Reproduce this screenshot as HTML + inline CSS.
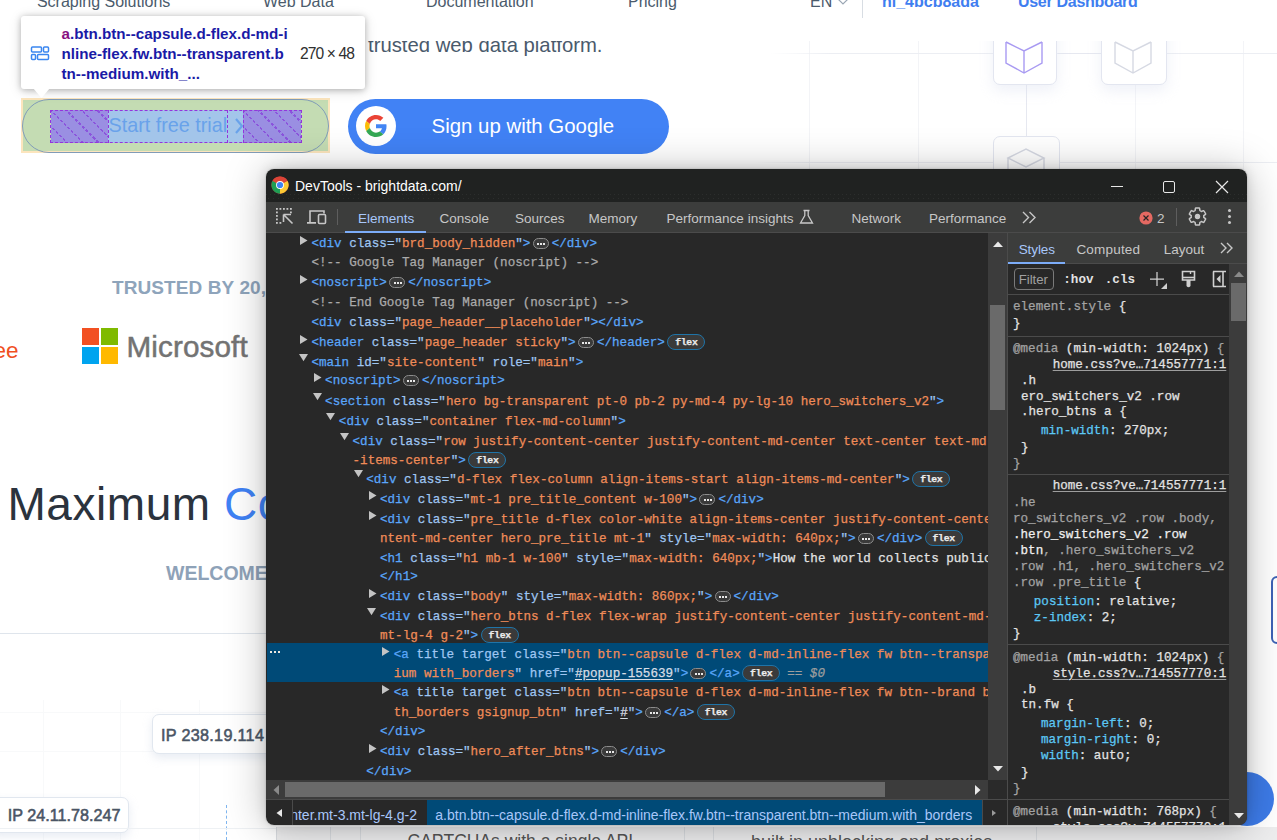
<!DOCTYPE html>
<html><head><meta charset="utf-8"><title>DevTools</title>
<style>
html,body{margin:0;padding:0}
body{width:1277px;height:840px;overflow:hidden;position:relative;background:#fff;font-family:"Liberation Sans",sans-serif}
.r{position:absolute}
.t{position:absolute;white-space:pre;line-height:1}
.dl{position:absolute;white-space:pre;font-family:"Liberation Mono",monospace;font-size:12.58px;line-height:19.556px;height:19.556px;-webkit-text-stroke:0.25px currentColor}
.ell{display:inline-block;vertical-align:top;margin:3px 3px 0 2.3px;width:16px;height:11px;box-sizing:border-box;border:1px solid #8c8c8c;border-radius:6px;background:#3a3a3a;position:relative}
.ell i{position:absolute;top:4px;width:2px;height:2px;background:#e8e8e8}
.ell i:nth-child(1){left:3.5px} .ell i:nth-child(2){left:6.5px} .ell i:nth-child(3){left:9.5px}
.flex{display:inline-block;vertical-align:top;margin:0 0 0 2.5px;width:38px;height:16px;box-sizing:border-box;border:1px solid #1f74a8;border-radius:8px;background:#3a3a3a;color:#ececec;font-family:"Liberation Mono",monospace;font-weight:bold;font-size:9.8px;line-height:15.5px;text-align:center;letter-spacing:-0.3px}
#dt{position:absolute;left:266px;top:169px;width:981px;height:656px;border-radius:8px;overflow:hidden;box-shadow:0 2px 42px rgba(0,0,0,.27),0 0 12px rgba(0,0,0,.13),0 0 2px rgba(0,0,0,.25)}
#dti{position:absolute;left:-266px;top:-169px;width:1277px;height:840px}
</style></head><body>
<div id="page"><div class="r" style="left:808.6px;top:41px;width:1px;height:130px;background:#f3f4f7"></div><div class="r" style="left:917.9px;top:41px;width:1px;height:130px;background:#f3f4f7"></div><div class="r" style="left:1134.5px;top:41px;width:1px;height:130px;background:#f3f4f7"></div><div class="r" style="left:1243px;top:41px;width:1px;height:130px;background:#f3f4f7"></div><div class="r" style="left:770px;top:53px;width:507px;height:1px;background:linear-gradient(90deg,rgba(236,238,243,0),#eceef3 60px)"></div><div class="r" style="left:755px;top:161.6px;width:522px;height:1px;background:linear-gradient(90deg,rgba(236,238,243,0),#eceef3 60px)"></div><div class="r" style="left:1026px;top:85px;width:1px;height:52px;background:#e6e8f0"></div><div class="r" style="left:1058px;top:53px;width:43px;height:1px;background:#e6e8f0"></div><div class="r" style="left:993px;top:10px;width:64px;height:75px;border:1.5px solid #e3e6f0;border-radius:7px;background:#fff;box-sizing:border-box;box-shadow:0 6px 14px rgba(220,224,240,.45)"></div><div class="r" style="left:1101px;top:10px;width:66px;height:75px;border:1.5px solid #e3e6f0;border-radius:7px;background:#fff;box-sizing:border-box;box-shadow:0 6px 14px rgba(220,224,240,.45)"></div><div class="r" style="left:993px;top:136px;width:67px;height:60px;border:1.5px solid #e3e6f0;border-radius:7px;background:#fff;box-sizing:border-box"></div><svg class="r" style="left:1000px;top:17px" width="50" height="60" viewBox="0 0 50 60"><path d="M6 25 L6 46 L24 56 L42 46 L42 25 M6 25 L24 34 L42 25 M24 34 L24 56" fill="none" stroke="#a99bf2" stroke-width="1.4"/></svg><svg class="r" style="left:1109px;top:17px" width="50" height="60" viewBox="0 0 50 60"><path d="M6 25 L6 46 L24 56 L42 46 L42 25 M6 25 L24 34 L42 25 M24 34 L24 56" fill="none" stroke="#d6d9e3" stroke-width="1.4"/></svg><svg class="r" style="left:1003px;top:146px" width="50" height="40" viewBox="0 0 50 40"><path d="M5 12 L23 3 L41 12 L23 21 Z M5 12 L5 30 M41 12 L41 30" fill="none" stroke="#d6d9e3" stroke-width="1.4"/></svg><div class="r" style="left:0px;top:0px;width:1277px;height:41px;background:#fff"></div><div class="t" style="left:36.90px;top:-5.94px;font-size:16px;color:#4b5b6c;font-weight:normal;font-family:'Liberation Sans', sans-serif;">Scraping Solutions</div><div class="t" style="left:263.00px;top:-5.94px;font-size:16px;color:#4b5b6c;font-weight:normal;font-family:'Liberation Sans', sans-serif;">Web Data</div><div class="t" style="left:426.00px;top:-5.94px;font-size:16px;color:#4b5b6c;font-weight:normal;font-family:'Liberation Sans', sans-serif;">Documentation</div><div class="t" style="left:628.00px;top:-5.94px;font-size:16px;color:#4b5b6c;font-weight:normal;font-family:'Liberation Sans', sans-serif;">Pricing</div><div class="t" style="left:810.00px;top:-5.94px;font-size:16px;color:#4b5b6c;font-weight:normal;font-family:'Liberation Sans', sans-serif;">EN</div><svg class="r" style="left:836px;top:-3px" width="14" height="10"><path d="M2 2 L7 7 L12 2" fill="none" stroke="#9aa6b4" stroke-width="1.2"/></svg><div class="r" style="left:862px;top:0px;width:1px;height:18px;background:#d8dde3"></div><div class="t" style="left:882.00px;top:-5.94px;font-size:16px;color:#3f7ef0;font-weight:bold;font-family:'Liberation Sans', sans-serif;">hl_4bcb8ada</div><div class="t" style="left:1018.00px;top:-5.94px;font-size:16px;color:#3f7ef0;font-weight:bold;font-family:'Liberation Sans', sans-serif;letter-spacing:-0.3px">User Dashboard</div><div class="r" style="left:0;top:41px;width:700px;height:30px;overflow:hidden"><div class="t" style="left:368.00px;top:-5.88px;font-size:20.3px;color:#4a5a6c;font-weight:normal;font-family:'Liberation Sans', sans-serif;">trusted web data platform.</div></div><div class="r" style="left:348px;top:99px;width:321px;height:55px;background:#4182f5;border-radius:28px"></div><div class="r" style="left:356px;top:106px;width:40px;height:40px;background:#fff;border-radius:50%"></div><svg class="r" style="left:365px;top:115px" width="22" height="22" viewBox="0 0 48 48"><path fill="#EA4335" d="M24 9.5c3.54 0 6.71 1.22 9.21 3.6l6.85-6.85C35.9 2.38 30.47 0 24 0 14.62 0 6.51 5.38 2.56 13.22l7.98 6.19C12.43 13.72 17.74 9.5 24 9.5z"/><path fill="#4285F4" d="M46.98 24.55c0-1.57-.15-3.09-.38-4.55H24v9.02h12.94c-.58 2.96-2.26 5.48-4.78 7.18l7.73 6c4.51-4.18 7.09-10.36 7.09-17.65z"/><path fill="#FBBC05" d="M10.53 28.59c-.48-1.45-.76-2.99-.76-4.59s.27-3.14.76-4.59l-7.98-6.19C.92 16.46 0 20.12 0 24c0 3.88.92 7.54 2.56 10.78l7.97-6.19z"/><path fill="#34A853" d="M24 48c6.48 0 11.93-2.13 15.89-5.81l-7.73-6c-2.15 1.45-4.92 2.3-8.16 2.3-6.26 0-11.57-4.22-13.47-9.91l-7.98 6.19C6.51 42.62 14.62 48 24 48z"/></svg><div class="t" style="left:431.60px;top:116.03px;font-size:20.4px;color:#ffffff;font-weight:normal;font-family:'Liberation Sans', sans-serif;">Sign up with Google</div><div class="r" style="left:21px;top:97.8px;width:309px;height:55.6px;background:#fce5bd"></div><div class="r" style="left:23px;top:99.8px;width:305px;height:51.6px;background:#c4dcb3"></div><div class="r" style="left:50.7px;top:110.2px;width:250.5px;height:32.4px;background:#a3c5ea"></div><div class="r" style="left:50.7px;top:110.2px;width:57.8px;height:32.4px;background:repeating-linear-gradient(-45deg, rgba(154,143,226,1) 0 2px, rgba(154,143,226,0) 2px 5px),repeating-linear-gradient(45deg, #8b55dc 0 1.7px, #9a8fe2 1.7px 11px)"></div><div class="r" style="left:243.2px;top:110.2px;width:58px;height:32.4px;background:repeating-linear-gradient(-45deg, rgba(154,143,226,1) 0 2px, rgba(154,143,226,0) 2px 5px),repeating-linear-gradient(45deg, #8b55dc 0 1.7px, #9a8fe2 1.7px 11px)"></div><div class="r" style="left:50.2px;top:109.7px;width:251.5px;height:33.4px;border:1.6px dashed #9434dc;box-sizing:border-box"></div><div class="r" style="left:107.5px;top:110.2px;width:0px;height:32.4px;border-left:1.6px dashed #9434dc"></div><div class="r" style="left:227px;top:110.2px;width:0px;height:32.4px;border-left:1.6px dashed #9434dc"></div><div class="r" style="left:242.5px;top:110.2px;width:0px;height:32.4px;border-left:1.6px dashed #9434dc"></div><div class="r" style="left:22px;top:98.9px;width:307px;height:54.6px;border:1.8px solid #819cb8;border-radius:27px;box-sizing:border-box"></div><div class="t" style="left:108.50px;top:115.88px;font-size:19.75px;color:#69a2ea;font-weight:normal;font-family:'Liberation Sans', sans-serif;">Start free trial</div><svg class="r" style="left:233px;top:117px" width="12" height="18"><path d="M3 2 L9 9 L3 16" fill="none" stroke="#69a2ea" stroke-width="2.2"/></svg><div class="t" style="left:112.00px;top:277.72px;font-size:19px;color:#8ea4bb;font-weight:bold;font-family:'Liberation Sans', sans-serif;letter-spacing:0.1px">TRUSTED BY 20,</div><div class="t" style="left:-6.50px;top:340.35px;font-size:22.5px;color:#f0501f;font-weight:normal;font-family:'Liberation Sans', sans-serif;">ee</div><div class="r" style="left:82px;top:328px;width:17px;height:17px;background:#f25022"></div><div class="r" style="left:101px;top:328px;width:17px;height:17px;background:#7fba00"></div><div class="r" style="left:82px;top:347px;width:17px;height:17px;background:#00a4ef"></div><div class="r" style="left:101px;top:347px;width:17px;height:17px;background:#ffb900"></div><div class="t" style="left:126.50px;top:331.66px;font-size:29.7px;color:#737373;font-weight:normal;font-family:'Liberation Sans', sans-serif;letter-spacing:0.1px;-webkit-text-stroke:0.5px #737373">Microsoft</div><div class="t" style="left:7.50px;top:481.46px;font-size:46px;color:#2b333d;font-weight:normal;font-family:'Liberation Sans', sans-serif;letter-spacing:0.55px">Maximum <span style="color:#3f82f5">Control</span></div><div class="t" style="left:166.00px;top:563.99px;font-size:19.5px;color:#8ea2b8;font-weight:bold;font-family:'Liberation Sans', sans-serif;">WELCOME TO BRIGHT DATA</div><div class="r" style="left:0px;top:633px;width:266px;height:1px;background:#dfe5ec"></div><div class="r" style="left:43px;top:700px;width:1px;height:140px;background:#f8f9fa"></div><div class="r" style="left:120px;top:700px;width:1px;height:140px;background:#f8f9fa"></div><div class="r" style="left:199px;top:700px;width:1px;height:140px;background:#f8f9fa"></div><div class="r" style="left:0px;top:712px;width:266px;height:1px;background:#f8f9fa"></div><div class="r" style="left:0px;top:750.7px;width:266px;height:1px;background:#f8f9fa"></div><div class="r" style="left:0px;top:828px;width:266px;height:1px;background:#f8f9fa"></div><div class="r" style="left:152px;top:714.3px;width:160px;height:40px;background:#fff;border:1px solid #e1e7ef;border-radius:7px;box-sizing:border-box;box-shadow:0 4px 10px rgba(190,200,220,.35)"></div><div class="t" style="left:161.00px;top:727.49px;font-size:16.2px;color:#4a5565;font-weight:normal;font-family:'Liberation Sans', sans-serif;-webkit-text-stroke:0.55px #4a5565;letter-spacing:0.3px">IP 238.19.114</div><div class="r" style="left:-10px;top:797px;width:139.3px;height:36px;background:#fff;border:1px solid #e1e7ef;border-radius:7px;box-sizing:border-box;box-shadow:0 4px 10px rgba(190,200,220,.35)"></div><div class="t" style="left:7.80px;top:807.49px;font-size:16.2px;color:#4a5565;font-weight:normal;font-family:'Liberation Sans', sans-serif;-webkit-text-stroke:0.55px #4a5565;letter-spacing:0px">IP 24.11.78.247</div><div class="r" style="left:226px;top:805px;width:0px;height:35px;border-left:1px dashed #7fb6f0"></div><div class="r" style="left:276px;top:827px;width:1001px;height:13px;background:#ededee"></div><div class="r" style="left:276px;top:827px;width:1px;height:13px;background:#d9dce0"></div><div class="r" style="left:330px;top:827px;width:1px;height:13px;background:#d9dce0"></div><div class="r" style="left:359.5px;top:827px;width:1px;height:13px;background:#d9dce0"></div><div class="r" style="left:683.5px;top:827px;width:1px;height:13px;background:#d9dce0"></div><div class="r" style="left:712.7px;top:827px;width:1px;height:13px;background:#d9dce0"></div><div class="r" style="left:1036px;top:827px;width:1px;height:13px;background:#d9dce0"></div><div class="r" style="left:0px;top:827.5px;width:276px;height:1px;background:#eef1f4"></div><div class="t" style="left:407.50px;top:833.19px;font-size:17.5px;color:#555;font-weight:normal;font-family:'Liberation Sans', sans-serif;">CAPTCHAs with a single API</div><div class="t" style="left:751.00px;top:832.76px;font-size:18px;color:#555;font-weight:normal;font-family:'Liberation Sans', sans-serif;">built in unblocking and proxies</div><div class="r" style="left:1271px;top:575.7px;width:20px;height:68px;border:2.5px solid #3d62b5;border-radius:6px;box-sizing:border-box"></div><div class="r" style="left:1220px;top:772px;width:54px;height:54px;background:#3d7be8;border-radius:50%"></div></div>
<div id="tt"><div class="r" style="left:21px;top:16px;width:344px;height:73px;background:#fff;border-radius:3px;box-shadow:0 1px 6px rgba(0,0,0,.25), 0 2px 14px rgba(0,0,0,.12)"></div><svg class="r" style="left:30px;top:88px" width="24" height="12"><path d="M3 0 L11.5 10 L20 0 Z" fill="#fff"/></svg><svg class="r" style="left:30px;top:46px" width="20" height="15" viewBox="0 0 20 15"><g fill="none" stroke="#3a86f0" stroke-width="1.5"><rect x="1.5" y="1" width="10" height="5" rx="1"/><rect x="13.5" y="1" width="5" height="5" rx="1"/><rect x="1.5" y="8.5" width="4" height="5" rx="1"/><rect x="7.5" y="8.5" width="11" height="5" rx="1"/></g></svg><div class="t" style="left:61.50px;top:25.88px;font-size:15.2px;color:#1a1aa6;font-weight:bold;font-family:'Liberation Sans', sans-serif;"><span style="color:#881280">a</span>.btn.btn--capsule.d-flex.d-md-i</div><div class="t" style="left:61.50px;top:45.88px;font-size:15.2px;color:#1a1aa6;font-weight:bold;font-family:'Liberation Sans', sans-serif;">nline-flex.fw.btn--transparent.b</div><div class="t" style="left:61.50px;top:66.13px;font-size:15.2px;color:#1a1aa6;font-weight:bold;font-family:'Liberation Sans', sans-serif;">tn--medium.with_...</div><div class="t" style="left:300.00px;top:45.69px;font-size:15.6px;color:#303030;font-weight:normal;font-family:'Liberation Sans', sans-serif;letter-spacing:-0.9px">270 × 48</div></div>
<div id="dt"><div id="dti"><div class="r" style="left:266px;top:169px;width:981px;height:33px;background:#202221"></div><div class="r" style="left:266px;top:194px;width:981px;height:1px;background:repeating-linear-gradient(90deg,#2c2e2d 0 1.3px,transparent 1.3px 4px)"></div><div class="r" style="left:268px;top:198px;width:979px;height:1px;background:repeating-linear-gradient(90deg,#2c2e2d 0 1.3px,transparent 1.3px 5px)"></div><div class="r" style="left:266px;top:202px;width:981px;height:30px;background:#3c3d3c"></div><div class="r" style="left:266px;top:232px;width:981px;height:1px;background:#4b4b4b"></div><div class="r" style="left:266px;top:233px;width:722px;height:547px;background:#282828"></div><div class="r" style="left:988px;top:233px;width:19px;height:547px;background:#3c3c3c"></div><div class="r" style="left:990px;top:305px;width:15px;height:105px;background:#6a6a6a"></div><svg class="r" style="left:992px;top:240px" width="12" height="8"><path d="M1 7 L6 1.5 L11 7 Z" fill="#e8e8e8"/></svg><svg class="r" style="left:992px;top:765px" width="12" height="8"><path d="M1 1 L6 6.5 L11 1 Z" fill="#e8e8e8"/></svg><div class="r" style="left:266px;top:780px;width:722px;height:19px;background:#3c3c3c"></div><div class="r" style="left:284.7px;top:782.3px;width:600px;height:14.5px;background:#6a6a6a"></div><svg class="r" style="left:272px;top:784px" width="8" height="12"><path d="M7 1 L1.5 6 L7 11 Z" fill="#8a8a8a"/></svg><svg class="r" style="left:974px;top:784px" width="8" height="12"><path d="M1 1 L6.5 6 L1 11 Z" fill="#e8e8e8"/></svg><div class="r" style="left:988px;top:780px;width:19px;height:19px;background:#2a2a2a"></div><div class="r" style="left:266px;top:799px;width:741px;height:1px;background:#4b4b4b"></div><div class="r" style="left:266px;top:800px;width:741px;height:25px;background:#282828"></div><div class="r" style="left:292px;top:800px;width:1px;height:25px;background:#4a4a4a"></div><svg class="r" style="left:275px;top:808px" width="8" height="10"><path d="M7 1 L1.5 5 L7 9 Z" fill="#e8e8e8"/></svg><div class="r" style="left:293px;top:800px;width:134px;height:25px;overflow:hidden"><div class="r" style="left:-293px;top:-800px;width:1277px;height:840px"><div class="t" style="left:290.20px;top:807.75px;font-size:14.0px;color:#a8c7fa;font-weight:normal;font-family:'Liberation Sans', sans-serif;">nter.mt-3.mt-lg-4.g-2</div></div></div><div class="r" style="left:427px;top:800px;width:555px;height:25px;background:#004a77"></div><div class="t" style="left:435.30px;top:807.75px;font-size:14.0px;color:#a8c7fa;font-weight:normal;font-family:'Liberation Sans', sans-serif;">a.btn.btn--capsule.d-flex.d-md-inline-flex.fw.btn--transparent.btn--medium.with_borders</div><div class="r" style="left:982px;top:800px;width:25px;height:25px;background:#282828"></div><div class="r" style="left:982px;top:800px;width:1px;height:25px;background:#4a4a4a"></div><svg class="r" style="left:990px;top:808px" width="8" height="10"><path d="M2 2 L6 5 L2 8 Z" fill="#9a9a9a"/></svg><div class="r" style="left:1007px;top:233px;width:1px;height:592px;background:#4b4b4b"></div><div class="r" style="left:1008px;top:233px;width:239px;height:30px;background:#3c3d3c"></div><div class="r" style="left:1008px;top:263px;width:239px;height:1px;background:#4b4b4b"></div><div class="r" style="left:1008px;top:262px;width:57px;height:2px;background:#7cacf8"></div><div class="r" style="left:1008px;top:264px;width:239px;height:561px;background:#282828"></div><div class="r" style="left:1229px;top:264px;width:18px;height:561px;background:#3c3c3c"></div><div class="r" style="left:1231px;top:283px;width:14.5px;height:38px;background:#6a6a6a"></div><svg class="r" style="left:1233px;top:270px" width="12" height="8"><path d="M1 7 L6 1.5 L11 7 Z" fill="#8a8a8a"/></svg><svg class="r" style="left:1233px;top:812px" width="12" height="8"><path d="M1 1 L6 6.5 L11 1 Z" fill="#e8e8e8"/></svg><div class="t" style="left:1018.70px;top:242.57px;font-size:13.5px;color:#a8c7fa;font-weight:normal;font-family:'Liberation Sans', sans-serif;letter-spacing:-0.1px">Styles</div><div class="t" style="left:1076.40px;top:242.57px;font-size:13.5px;color:#c7c7c7;font-weight:normal;font-family:'Liberation Sans', sans-serif;letter-spacing:0.2px">Computed</div><div class="t" style="left:1163.80px;top:242.57px;font-size:13.5px;color:#c7c7c7;font-weight:normal;font-family:'Liberation Sans', sans-serif;">Layout</div><svg class="r" style="left:1219px;top:242px" width="16" height="12"><path d="M2 1 L7 6 L2 11 M8 1 L13 6 L8 11" fill="none" stroke="#c7c7c7" stroke-width="1.4"/></svg><div class="r" style="left:1014px;top:268px;width:40px;height:21.5px;border:1px solid #7a7a7a;border-radius:4px;box-sizing:border-box"></div><div class="t" style="left:1018.70px;top:272.83px;font-size:13.2px;color:#a0a0a0;font-weight:normal;font-family:'Liberation Sans', sans-serif;">Filter</div><div class="t" style="left:1063.30px;top:274.36px;font-size:12.58px;color:#e3e3e3;font-weight:bold;font-family:'Liberation Mono', monospace;">:hov</div><div class="t" style="left:1104.80px;top:274.36px;font-size:12.58px;color:#e3e3e3;font-weight:bold;font-family:'Liberation Mono', monospace;">.cls</div><svg class="r" style="left:1148px;top:270px" width="22" height="20"><path d="M9 2 V16 M2 9 H16" stroke="#d0d0d0" stroke-width="1.25"/><path d="M19 13 V19 H13 Z" fill="#d0d0d0"/></svg><svg class="r" style="left:1180px;top:270px" width="17" height="19"><path d="M2.5 1.5 H14.5 V10 H2.5 Z" fill="none" stroke="#d0d0d0" stroke-width="1.6"/><path d="M2.5 7.5 H14.5" stroke="#d0d0d0" stroke-width="1.6"/><path d="M10.5 1.5 V4" stroke="#d0d0d0" stroke-width="1.4"/><path d="M6.5 10 H10.5 V16 Q8.5 18.5 6.5 16 Z" fill="#d0d0d0"/></svg><svg class="r" style="left:1211px;top:270px" width="17" height="18"><path d="M2 1.5 H15 M2 16.5 H15 M2.5 1.5 V16.5 M12 1.5 V16.5" fill="none" stroke="#d0d0d0" stroke-width="1.6"/><path d="M9.5 5 L5.5 9 L9.5 13 Z" fill="#d0d0d0"/></svg><div class="r" style="left:1008px;top:294px;width:221px;height:1px;background:#4b4b4b"></div><svg class="r" style="left:271px;top:176px" width="18" height="18" viewBox="0 0 48 48"><circle cx="24" cy="24" r="23" fill="#dc4437"/><path d="M24 24 L4.1 12.5 A23 23 0 0 0 24 47 Z" fill="#1e9e54"/><path d="M24 24 L24 47 A23 23 0 0 0 43.9 12.5 Z" fill="#fcc934"/><path d="M24 24 L43.9 12.5 A23 23 0 0 0 4.1 12.5 Z" fill="#dc4437"/><circle cx="24" cy="24" r="10.5" fill="#fff"/><circle cx="24" cy="24" r="8.3" fill="#3e83f1"/></svg><div class="t" style="left:295.00px;top:179.15px;font-size:14px;color:#ffffff;font-weight:normal;font-family:'Liberation Sans', sans-serif;">DevTools - brightdata.com/</div><div class="r" style="left:1111px;top:186px;width:11.5px;height:1px;background:#e8e8e8"></div><div class="r" style="left:1163px;top:181px;width:12px;height:11.5px;border:1.2px solid #e8e8e8;border-radius:2px;box-sizing:border-box"></div><svg class="r" style="left:1215px;top:180px" width="14" height="14"><path d="M1 1 L13 13 M13 1 L1 13" stroke="#e8e8e8" stroke-width="1.2"/></svg><svg class="r" style="left:275px;top:207px" width="20" height="20" viewBox="0 0 20 20"><g fill="#c7c7c7"><rect x="1" y="1" width="1.8" height="1.8"/><rect x="4.5" y="1" width="1.8" height="1.8"/><rect x="8" y="1" width="1.8" height="1.8"/><rect x="11.5" y="1" width="1.8" height="1.8"/><rect x="15" y="1" width="1.8" height="1.8"/><rect x="1" y="4.5" width="1.8" height="1.8"/><rect x="1" y="8" width="1.8" height="1.8"/><rect x="1" y="11.5" width="1.8" height="1.8"/><rect x="1" y="15" width="1.8" height="1.8"/><rect x="4.5" y="15" width="1.8" height="1.8"/><rect x="15" y="4.5" width="1.8" height="1.8"/></g><path d="M8.5 7.5 H16 M8.5 7.5 V15 M8.5 7.5 L17.5 16.5" stroke="#c7c7c7" stroke-width="1.6" fill="none"/></svg><svg class="r" style="left:306px;top:209px" width="22" height="16" viewBox="0 0 22 16"><path d="M4 13.5 V2 H18 V4.5" fill="none" stroke="#c7c7c7" stroke-width="1.6"/><path d="M1 13.8 H10" stroke="#c7c7c7" stroke-width="1.8"/><rect x="12.5" y="5.5" width="7" height="9" rx="1" fill="none" stroke="#c7c7c7" stroke-width="1.6"/></svg><div class="r" style="left:337px;top:209px;width:1px;height:16px;background:#5e5e5e"></div><div class="r" style="left:345px;top:231.2px;width:81px;height:2px;background:#7cacf8"></div><div class="t" style="left:358.00px;top:211.87px;font-size:13.5px;color:#a8c7fa;font-weight:normal;font-family:'Liberation Sans', sans-serif;">Elements</div><div class="t" style="left:439.50px;top:211.87px;font-size:13.5px;color:#c7c7c7;font-weight:normal;font-family:'Liberation Sans', sans-serif;">Console</div><div class="t" style="left:515.00px;top:211.87px;font-size:13.5px;color:#c7c7c7;font-weight:normal;font-family:'Liberation Sans', sans-serif;">Sources</div><div class="t" style="left:588.60px;top:211.87px;font-size:13.5px;color:#c7c7c7;font-weight:normal;font-family:'Liberation Sans', sans-serif;">Memory</div><div class="t" style="left:666.60px;top:211.87px;font-size:13.5px;color:#c7c7c7;font-weight:normal;font-family:'Liberation Sans', sans-serif;">Performance insights</div><svg class="r" style="left:799px;top:209px" width="15" height="16"><path d="M4.5 1.5 H10.5 M5.8 1.5 V6.5 L1.5 14 H13.5 L9.2 6.5 V1.5" fill="none" stroke="#c7c7c7" stroke-width="1.3"/></svg><div class="t" style="left:851.60px;top:211.87px;font-size:13.5px;color:#c7c7c7;font-weight:normal;font-family:'Liberation Sans', sans-serif;">Network</div><div class="t" style="left:929.00px;top:211.87px;font-size:13.5px;color:#c7c7c7;font-weight:normal;font-family:'Liberation Sans', sans-serif;">Performance</div><svg class="r" style="left:1021px;top:211px" width="17" height="13"><path d="M2 1 L7.5 6.5 L2 12 M8.5 1 L14 6.5 L8.5 12" fill="none" stroke="#c7c7c7" stroke-width="1.4"/></svg><svg class="r" style="left:1139px;top:211px" width="14" height="14"><circle cx="7" cy="7" r="6.6" fill="#e46962"/><path d="M4.5 4.5 L9.5 9.5 M9.5 4.5 L4.5 9.5" stroke="#262626" stroke-width="1.2"/></svg><div class="t" style="left:1157.00px;top:212.37px;font-size:13.5px;color:#c7c7c7;font-weight:normal;font-family:'Liberation Sans', sans-serif;">2</div><div class="r" style="left:1176px;top:208px;width:1px;height:18px;background:#5e5e5e"></div><svg class="r" style="left:1187px;top:206px" width="21" height="21" viewBox="0 0 24 24"><path fill="none" stroke="#c7c7c7" stroke-width="1.7" stroke-linejoin="round" d="M19.14 12.94c.04-.3.06-.61.06-.94 0-.32-.02-.64-.07-.94l2.03-1.58c.18-.14.23-.41.12-.61l-1.92-3.32c-.12-.22-.37-.29-.59-.22l-2.39.96c-.5-.38-1.030-.7-1.62-.94l-.36-2.54c-.04-.24-.24-.41-.48-.41h-3.84c-.24 0-.43.17-.47.41l-.36 2.540c-.59.24-1.13.57-1.62.94l-2.39-.96c-.22-.08-.47 0-.59.22L2.74 8.87c-.12.21-.08.47.12.61l2.03 1.58c-.05.3-.09.63-.09.94s.02.64.07.94l-2.03 1.58c-.18.14-.23.41-.12.61l1.92 3.32c.12.22.37.29.59.22l2.39-.96c.5.38 1.03.7 1.62.94l.36 2.54c.05.24.24.41.48.41h3.84c.24 0 .44-.17.47-.41l.36-2.54c.59-.24 1.13-.56 1.62-.94l2.39.96c.22.08.47 0 .59-.22l1.92-3.32c.12-.22.07-.47-.12-.61l-2.01-1.58z"/><circle cx="12" cy="12" r="3.1" fill="#c7c7c7"/></svg><div class="r" style="left:1228px;top:209px;width:3.2px;height:3.2px;background:#c7c7c7;border-radius:50%"></div><div class="r" style="left:1228px;top:214.8px;width:3.2px;height:3.2px;background:#c7c7c7;border-radius:50%"></div><div class="r" style="left:1228px;top:220.6px;width:3.2px;height:3.2px;background:#c7c7c7;border-radius:50%"></div><div class="r" style="left:267px;top:642.5px;width:721px;height:39.1px;background:#004a77"></div><div class="r" style="left:270px;top:651px;width:2.2px;height:2.2px;background:#ece8e0"></div><div class="r" style="left:274px;top:651px;width:2.2px;height:2.2px;background:#ece8e0"></div><div class="r" style="left:278px;top:651px;width:2.2px;height:2.2px;background:#ece8e0"></div><div class="r" style="left:266px;top:233px;width:722px;height:547px;overflow:hidden"><div class="r" style="left:-266px;top:-233px;width:1277px;height:840px"><svg class="r" style="left:300.00px;top:235.90px" width="9" height="10"><path d="M0 0 L7.5 4.5 L0 9 Z" fill="#c4c4c4"/></svg><div class="dl" style="left:311.40px;top:235.17px"><span style="color:#5aa6fa">&lt;div</span><span style="color:#e3e3e3"> </span><span style="color:#9fc6f2">class="</span><span style="color:#f08c58">brd_body_hidden</span><span style="color:#9fc6f2">"</span><span style="color:#5aa6fa">&gt;</span><span class="ell"><i></i><i></i><i></i></span><span style="color:#5aa6fa">&lt;/div&gt;</span></div><div class="dl" style="left:311.40px;top:253.97px"><span style="color:#ababab">&lt;!-- Google Tag Manager (noscript) --&gt;</span></div><svg class="r" style="left:300.00px;top:274.70px" width="9" height="10"><path d="M0 0 L7.5 4.5 L0 9 Z" fill="#c4c4c4"/></svg><div class="dl" style="left:311.40px;top:273.97px"><span style="color:#5aa6fa">&lt;noscript&gt;</span><span class="ell"><i></i><i></i><i></i></span><span style="color:#5aa6fa">&lt;/noscript&gt;</span></div><div class="dl" style="left:311.40px;top:293.97px"><span style="color:#ababab">&lt;!-- End Google Tag Manager (noscript) --&gt;</span></div><div class="dl" style="left:311.40px;top:313.97px"><span style="color:#5aa6fa">&lt;div</span><span style="color:#e3e3e3"> </span><span style="color:#9fc6f2">class="</span><span style="color:#f08c58">page_header__placeholder</span><span style="color:#9fc6f2">"</span><span style="color:#5aa6fa">&gt;&lt;/div&gt;</span></div><svg class="r" style="left:300.00px;top:334.70px" width="9" height="10"><path d="M0 0 L7.5 4.5 L0 9 Z" fill="#c4c4c4"/></svg><div class="dl" style="left:311.40px;top:333.97px"><span style="color:#5aa6fa">&lt;header</span><span style="color:#e3e3e3"> </span><span style="color:#9fc6f2">class="</span><span style="color:#f08c58">page_header sticky</span><span style="color:#9fc6f2">"</span><span style="color:#5aa6fa">&gt;</span><span class="ell"><i></i><i></i><i></i></span><span style="color:#5aa6fa">&lt;/header&gt;</span><span class="flex">flex</span></div><svg class="r" style="left:298.80px;top:353.80px" width="10" height="8"><path d="M0 0 L9 0 L4.5 7.3 Z" fill="#c4c4c4"/></svg><div class="dl" style="left:311.40px;top:353.97px"><span style="color:#5aa6fa">&lt;main</span><span style="color:#e3e3e3"> </span><span style="color:#9fc6f2">id="</span><span style="color:#f08c58">site-content</span><span style="color:#9fc6f2">" role="</span><span style="color:#f08c58">main</span><span style="color:#9fc6f2">"</span><span style="color:#5aa6fa">&gt;</span></div><svg class="r" style="left:313.72px;top:373.20px" width="9" height="10"><path d="M0 0 L7.5 4.5 L0 9 Z" fill="#c4c4c4"/></svg><div class="dl" style="left:325.12px;top:372.47px"><span style="color:#5aa6fa">&lt;noscript&gt;</span><span class="ell"><i></i><i></i><i></i></span><span style="color:#5aa6fa">&lt;/noscript&gt;</span></div><svg class="r" style="left:312.52px;top:392.80px" width="10" height="8"><path d="M0 0 L9 0 L4.5 7.3 Z" fill="#c4c4c4"/></svg><div class="dl" style="left:325.12px;top:392.97px"><span style="color:#5aa6fa">&lt;section</span><span style="color:#e3e3e3"> </span><span style="color:#9fc6f2">class="</span><span style="color:#f08c58">hero bg-transparent pt-0 pb-2 py-md-4 py-lg-10 hero_switchers_v2</span><span style="color:#9fc6f2">"</span><span style="color:#5aa6fa">&gt;</span></div><svg class="r" style="left:326.24px;top:412.80px" width="10" height="8"><path d="M0 0 L9 0 L4.5 7.3 Z" fill="#c4c4c4"/></svg><div class="dl" style="left:338.84px;top:412.97px"><span style="color:#5aa6fa">&lt;div</span><span style="color:#e3e3e3"> </span><span style="color:#9fc6f2">class="</span><span style="color:#f08c58">container flex-md-column</span><span style="color:#9fc6f2">"</span><span style="color:#5aa6fa">&gt;</span></div><svg class="r" style="left:339.96px;top:432.80px" width="10" height="8"><path d="M0 0 L9 0 L4.5 7.3 Z" fill="#c4c4c4"/></svg><div class="dl" style="left:352.56px;top:432.97px"><span style="color:#5aa6fa">&lt;div</span><span style="color:#e3e3e3"> </span><span style="color:#9fc6f2">class="</span><span style="color:#f08c58">row justify-content-center justify-content-md-center text-center text-md-center align</span></div><div class="dl" style="left:352.56px;top:452.07px"><span style="color:#f08c58">-items-center</span><span style="color:#9fc6f2">"</span><span style="color:#5aa6fa">&gt;</span><span class="flex">flex</span></div><svg class="r" style="left:353.68px;top:470.40px" width="10" height="8"><path d="M0 0 L9 0 L4.5 7.3 Z" fill="#c4c4c4"/></svg><div class="dl" style="left:366.28px;top:470.57px"><span style="color:#5aa6fa">&lt;div</span><span style="color:#e3e3e3"> </span><span style="color:#9fc6f2">class="</span><span style="color:#f08c58">d-flex flex-column align-items-start align-items-md-center</span><span style="color:#9fc6f2">"</span><span style="color:#5aa6fa">&gt;</span><span class="flex">flex</span></div><svg class="r" style="left:368.60px;top:491.30px" width="9" height="10"><path d="M0 0 L7.5 4.5 L0 9 Z" fill="#c4c4c4"/></svg><div class="dl" style="left:380.00px;top:490.57px"><span style="color:#5aa6fa">&lt;div</span><span style="color:#e3e3e3"> </span><span style="color:#9fc6f2">class="</span><span style="color:#f08c58">mt-1 pre_title_content w-100</span><span style="color:#9fc6f2">"</span><span style="color:#5aa6fa">&gt;</span><span class="ell"><i></i><i></i><i></i></span><span style="color:#5aa6fa">&lt;/div&gt;</span></div><svg class="r" style="left:368.60px;top:511.30px" width="9" height="10"><path d="M0 0 L7.5 4.5 L0 9 Z" fill="#c4c4c4"/></svg><div class="dl" style="left:380.00px;top:510.57px"><span style="color:#5aa6fa">&lt;div</span><span style="color:#e3e3e3"> </span><span style="color:#9fc6f2">class="</span><span style="color:#f08c58">pre_title d-flex color-white align-items-center justify-content-center justify-co</span></div><div class="dl" style="left:380.00px;top:529.67px"><span style="color:#f08c58">ntent-md-center hero_pre_title mt-1</span><span style="color:#9fc6f2">"</span><span style="color:#e3e3e3"> </span><span style="color:#9fc6f2">style="</span><span style="color:#f08c58">max-width: 640px;</span><span style="color:#9fc6f2">"</span><span style="color:#5aa6fa">&gt;</span><span class="ell"><i></i><i></i><i></i></span><span style="color:#5aa6fa">&lt;/div&gt;</span><span class="flex">flex</span></div><div class="dl" style="left:380.00px;top:550.07px"><span style="color:#5aa6fa">&lt;h1</span><span style="color:#e3e3e3"> </span><span style="color:#9fc6f2">class="</span><span style="color:#f08c58">h1 mb-1 w-100</span><span style="color:#9fc6f2">"</span><span style="color:#e3e3e3"> </span><span style="color:#9fc6f2">style="</span><span style="color:#f08c58">max-width: 640px;</span><span style="color:#9fc6f2">"</span><span style="color:#5aa6fa">&gt;</span><span style="color:#e3e3e3">How the world collects public data</span></div><div class="dl" style="left:380.00px;top:568.17px"><span style="color:#5aa6fa">&lt;/h1&gt;</span></div><svg class="r" style="left:368.60px;top:588.90px" width="9" height="10"><path d="M0 0 L7.5 4.5 L0 9 Z" fill="#c4c4c4"/></svg><div class="dl" style="left:380.00px;top:588.17px"><span style="color:#5aa6fa">&lt;div</span><span style="color:#e3e3e3"> </span><span style="color:#9fc6f2">class="</span><span style="color:#f08c58">body</span><span style="color:#9fc6f2">"</span><span style="color:#e3e3e3"> </span><span style="color:#9fc6f2">style="</span><span style="color:#f08c58">max-width: 860px;</span><span style="color:#9fc6f2">"</span><span style="color:#5aa6fa">&gt;</span><span class="ell"><i></i><i></i><i></i></span><span style="color:#5aa6fa">&lt;/div&gt;</span></div><svg class="r" style="left:367.40px;top:607.60px" width="10" height="8"><path d="M0 0 L9 0 L4.5 7.3 Z" fill="#c4c4c4"/></svg><div class="dl" style="left:380.00px;top:607.77px"><span style="color:#5aa6fa">&lt;div</span><span style="color:#e3e3e3"> </span><span style="color:#9fc6f2">class="</span><span style="color:#f08c58">hero_btns d-flex flex-wrap justify-content-center justify-content-md-center</span></div><div class="dl" style="left:380.00px;top:626.97px"><span style="color:#f08c58">mt-lg-4 g-2</span><span style="color:#9fc6f2">"</span><span style="color:#5aa6fa">&gt;</span><span class="flex">flex</span></div><svg class="r" style="left:382.32px;top:646.60px" width="9" height="10"><path d="M0 0 L7.5 4.5 L0 9 Z" fill="#c4c4c4"/></svg><div class="dl" style="left:393.72px;top:645.87px"><span style="color:#5aa6fa">&lt;a</span><span style="color:#e3e3e3"> </span><span style="color:#9fc6f2">title target class="</span><span style="color:#f08c58">btn btn--capsule d-flex d-md-inline-flex fw btn--transparent btn--med</span></div><div class="dl" style="left:393.72px;top:664.87px"><span style="color:#f08c58">ium with_borders</span><span style="color:#9fc6f2">"</span><span style="color:#e3e3e3"> </span><span style="color:#9fc6f2">href="</span><span style="color:#d8dde5;text-decoration:underline;text-underline-offset:2px">#popup-155639</span><span style="color:#9fc6f2">"</span><span style="color:#5aa6fa">&gt;</span><span class="ell"><i></i><i></i><i></i></span><span style="color:#5aa6fa">&lt;/a&gt;</span><span class="flex">flex</span><span style="color:#9e9e9e;font-style:italic;margin-left:7px">== $0</span></div><svg class="r" style="left:382.32px;top:685.10px" width="9" height="10"><path d="M0 0 L7.5 4.5 L0 9 Z" fill="#c4c4c4"/></svg><div class="dl" style="left:393.72px;top:684.37px"><span style="color:#5aa6fa">&lt;a</span><span style="color:#e3e3e3"> </span><span style="color:#9fc6f2">title target class="</span><span style="color:#f08c58">btn btn--capsule d-flex d-md-inline-flex fw btn--brand bo</span></div><div class="dl" style="left:393.72px;top:703.57px"><span style="color:#f08c58">th_borders gsignup_btn</span><span style="color:#9fc6f2">"</span><span style="color:#e3e3e3"> </span><span style="color:#9fc6f2">href="</span><span style="color:#d8dde5;text-decoration:underline;text-underline-offset:2px">#</span><span style="color:#9fc6f2">"</span><span style="color:#5aa6fa">&gt;</span><span class="ell"><i></i><i></i><i></i></span><span style="color:#5aa6fa">&lt;/a&gt;</span><span class="flex">flex</span></div><div class="dl" style="left:380.00px;top:722.87px"><span style="color:#5aa6fa">&lt;/div&gt;</span></div><svg class="r" style="left:368.60px;top:743.60px" width="9" height="10"><path d="M0 0 L7.5 4.5 L0 9 Z" fill="#c4c4c4"/></svg><div class="dl" style="left:380.00px;top:742.87px"><span style="color:#5aa6fa">&lt;div</span><span style="color:#e3e3e3"> </span><span style="color:#9fc6f2">class="</span><span style="color:#f08c58">hero_after_btns</span><span style="color:#9fc6f2">"</span><span style="color:#5aa6fa">&gt;</span><span class="ell"><i></i><i></i><i></i></span><span style="color:#5aa6fa">&lt;/div&gt;</span></div><div class="dl" style="left:366.28px;top:762.87px"><span style="color:#5aa6fa">&lt;/div&gt;</span></div></div></div><div class="r" style="left:1008px;top:295px;width:221px;height:530px;overflow:hidden"><div class="r" style="left:-1008px;top:-295px;width:1277px;height:840px"><div class="t" style="left:1013.00px;top:300.56px;font-size:12.58px;color:#e3e3e3;font-weight:normal;font-family:'Liberation Mono', monospace;-webkit-text-stroke:0.25px currentColor"><span style="color:#a3a3a3">element.style</span> <span style="color:#e3e3e3">{</span></div><div class="t" style="left:1013.00px;top:317.76px;font-size:12.58px;color:#e3e3e3;font-weight:normal;font-family:'Liberation Mono', monospace;-webkit-text-stroke:0.25px currentColor"><span style="color:#e3e3e3">}</span></div><div class="r" style="left:1008px;top:336px;width:221px;height:1px;background:#4b4b4b"></div><div class="t" style="left:1013.00px;top:342.56px;font-size:12.58px;color:#e3e3e3;font-weight:normal;font-family:'Liberation Mono', monospace;-webkit-text-stroke:0.25px currentColor"><span style="color:#a3a3a3">@media</span> <span style="color:#e3e3e3">(min-width: 1024px)</span> <span style="color:#a3a3a3">{</span></div><div class="t" style="left:1052.70px;top:358.76px;font-size:12.58px;color:#e3e3e3;font-weight:normal;font-family:'Liberation Mono', monospace;-webkit-text-stroke:0.25px currentColor"><span style="color:#e3e3e3;text-decoration:underline;text-underline-offset:2px;text-decoration-color:#9e9e9e">home.css?ve…714557771:1</span></div><div class="t" style="left:1021.00px;top:374.96px;font-size:12.58px;color:#e3e3e3;font-weight:normal;font-family:'Liberation Mono', monospace;-webkit-text-stroke:0.25px currentColor"><span style="color:#e3e3e3">.h</span></div><div class="t" style="left:1021.00px;top:390.76px;font-size:12.58px;color:#e3e3e3;font-weight:normal;font-family:'Liberation Mono', monospace;-webkit-text-stroke:0.25px currentColor"><span style="color:#e3e3e3">ero_switchers_v2 .row</span></div><div class="t" style="left:1021.00px;top:406.46px;font-size:12.58px;color:#e3e3e3;font-weight:normal;font-family:'Liberation Mono', monospace;-webkit-text-stroke:0.25px currentColor"><span style="color:#e3e3e3">.hero_btns a</span> <span style="color:#e3e3e3">{</span></div><div class="t" style="left:1041.00px;top:425.36px;font-size:12.58px;color:#e3e3e3;font-weight:normal;font-family:'Liberation Mono', monospace;-webkit-text-stroke:0.25px currentColor"><span style="color:#5cc8f5">min-width</span><span style="color:#e3e3e3">: 270px;</span></div><div class="t" style="left:1021.00px;top:442.26px;font-size:12.58px;color:#e3e3e3;font-weight:normal;font-family:'Liberation Mono', monospace;-webkit-text-stroke:0.25px currentColor"><span style="color:#e3e3e3">}</span></div><div class="t" style="left:1013.00px;top:457.86px;font-size:12.58px;color:#e3e3e3;font-weight:normal;font-family:'Liberation Mono', monospace;-webkit-text-stroke:0.25px currentColor"><span style="color:#a3a3a3">}</span></div><div class="r" style="left:1008px;top:474px;width:221px;height:1px;background:#4b4b4b"></div><div class="t" style="left:1052.70px;top:480.26px;font-size:12.58px;color:#e3e3e3;font-weight:normal;font-family:'Liberation Mono', monospace;-webkit-text-stroke:0.25px currentColor"><span style="color:#e3e3e3;text-decoration:underline;text-underline-offset:2px;text-decoration-color:#9e9e9e">home.css?ve…714557771:1</span></div><div class="t" style="left:1013.00px;top:496.56px;font-size:12.58px;color:#e3e3e3;font-weight:normal;font-family:'Liberation Mono', monospace;-webkit-text-stroke:0.25px currentColor"><span style="color:#a3a3a3">.he</span></div><div class="t" style="left:1013.00px;top:512.76px;font-size:12.58px;color:#e3e3e3;font-weight:normal;font-family:'Liberation Mono', monospace;-webkit-text-stroke:0.25px currentColor"><span style="color:#a3a3a3">ro_switchers_v2 .row .body,</span></div><div class="t" style="left:1013.00px;top:528.96px;font-size:12.58px;color:#e3e3e3;font-weight:normal;font-family:'Liberation Mono', monospace;-webkit-text-stroke:0.25px currentColor"><span style="color:#f0f0f0">.hero_switchers_v2 .row</span></div><div class="t" style="left:1013.00px;top:544.66px;font-size:12.58px;color:#e3e3e3;font-weight:normal;font-family:'Liberation Mono', monospace;-webkit-text-stroke:0.25px currentColor"><span style="color:#f0f0f0">.btn</span><span style="color:#a3a3a3">, .hero_switchers_v2</span></div><div class="t" style="left:1013.00px;top:560.56px;font-size:12.58px;color:#e3e3e3;font-weight:normal;font-family:'Liberation Mono', monospace;-webkit-text-stroke:0.25px currentColor"><span style="color:#a3a3a3">.row .h1, .hero_switchers_v2</span></div><div class="t" style="left:1013.00px;top:576.76px;font-size:12.58px;color:#e3e3e3;font-weight:normal;font-family:'Liberation Mono', monospace;-webkit-text-stroke:0.25px currentColor"><span style="color:#a3a3a3">.row .pre_title</span> <span style="color:#e3e3e3">{</span></div><div class="t" style="left:1033.80px;top:595.66px;font-size:12.58px;color:#e3e3e3;font-weight:normal;font-family:'Liberation Mono', monospace;-webkit-text-stroke:0.25px currentColor"><span style="color:#5cc8f5">position</span><span style="color:#e3e3e3">: relative;</span></div><div class="t" style="left:1033.80px;top:611.86px;font-size:12.58px;color:#e3e3e3;font-weight:normal;font-family:'Liberation Mono', monospace;-webkit-text-stroke:0.25px currentColor"><span style="color:#5cc8f5">z-index</span><span style="color:#e3e3e3">: 2;</span></div><div class="t" style="left:1013.00px;top:628.46px;font-size:12.58px;color:#e3e3e3;font-weight:normal;font-family:'Liberation Mono', monospace;-webkit-text-stroke:0.25px currentColor"><span style="color:#e3e3e3">}</span></div><div class="r" style="left:1008px;top:644px;width:221px;height:1px;background:#4b4b4b"></div><div class="t" style="left:1013.00px;top:651.56px;font-size:12.58px;color:#e3e3e3;font-weight:normal;font-family:'Liberation Mono', monospace;-webkit-text-stroke:0.25px currentColor"><span style="color:#a3a3a3">@media</span> <span style="color:#e3e3e3">(min-width: 1024px)</span> <span style="color:#a3a3a3">{</span></div><div class="t" style="left:1052.70px;top:667.76px;font-size:12.58px;color:#e3e3e3;font-weight:normal;font-family:'Liberation Mono', monospace;-webkit-text-stroke:0.25px currentColor"><span style="color:#e3e3e3;text-decoration:underline;text-underline-offset:2px;text-decoration-color:#9e9e9e">style.css?v…714557770:1</span></div><div class="t" style="left:1021.00px;top:683.96px;font-size:12.58px;color:#e3e3e3;font-weight:normal;font-family:'Liberation Mono', monospace;-webkit-text-stroke:0.25px currentColor"><span style="color:#e3e3e3">.b</span></div><div class="t" style="left:1021.00px;top:699.26px;font-size:12.58px;color:#e3e3e3;font-weight:normal;font-family:'Liberation Mono', monospace;-webkit-text-stroke:0.25px currentColor"><span style="color:#e3e3e3">tn.fw</span> <span style="color:#e3e3e3">{</span></div><div class="t" style="left:1041.00px;top:718.16px;font-size:12.58px;color:#e3e3e3;font-weight:normal;font-family:'Liberation Mono', monospace;-webkit-text-stroke:0.25px currentColor"><span style="color:#5cc8f5">margin-left</span><span style="color:#e3e3e3">: 0;</span></div><div class="t" style="left:1041.00px;top:734.46px;font-size:12.58px;color:#e3e3e3;font-weight:normal;font-family:'Liberation Mono', monospace;-webkit-text-stroke:0.25px currentColor"><span style="color:#5cc8f5">margin-right</span><span style="color:#e3e3e3">: 0;</span></div><div class="t" style="left:1041.00px;top:749.76px;font-size:12.58px;color:#e3e3e3;font-weight:normal;font-family:'Liberation Mono', monospace;-webkit-text-stroke:0.25px currentColor"><span style="color:#5cc8f5">width</span><span style="color:#e3e3e3">: auto;</span></div><div class="t" style="left:1021.00px;top:766.86px;font-size:12.58px;color:#e3e3e3;font-weight:normal;font-family:'Liberation Mono', monospace;-webkit-text-stroke:0.25px currentColor"><span style="color:#e3e3e3">}</span></div><div class="t" style="left:1013.00px;top:783.06px;font-size:12.58px;color:#e3e3e3;font-weight:normal;font-family:'Liberation Mono', monospace;-webkit-text-stroke:0.25px currentColor"><span style="color:#a3a3a3">}</span></div><div class="r" style="left:1008px;top:799px;width:221px;height:1px;background:#4b4b4b"></div><div class="t" style="left:1013.00px;top:805.56px;font-size:12.58px;color:#e3e3e3;font-weight:normal;font-family:'Liberation Mono', monospace;-webkit-text-stroke:0.25px currentColor"><span style="color:#a3a3a3">@media</span> <span style="color:#e3e3e3">(min-width: 768px)</span> <span style="color:#a3a3a3">{</span></div><div class="t" style="left:1052.70px;top:821.76px;font-size:12.58px;color:#e3e3e3;font-weight:normal;font-family:'Liberation Mono', monospace;-webkit-text-stroke:0.25px currentColor"><span style="color:#e3e3e3;text-decoration:underline;text-underline-offset:2px;text-decoration-color:#9e9e9e">style.css?v…714557770:1</span></div></div></div></div></div>
</body></html>
